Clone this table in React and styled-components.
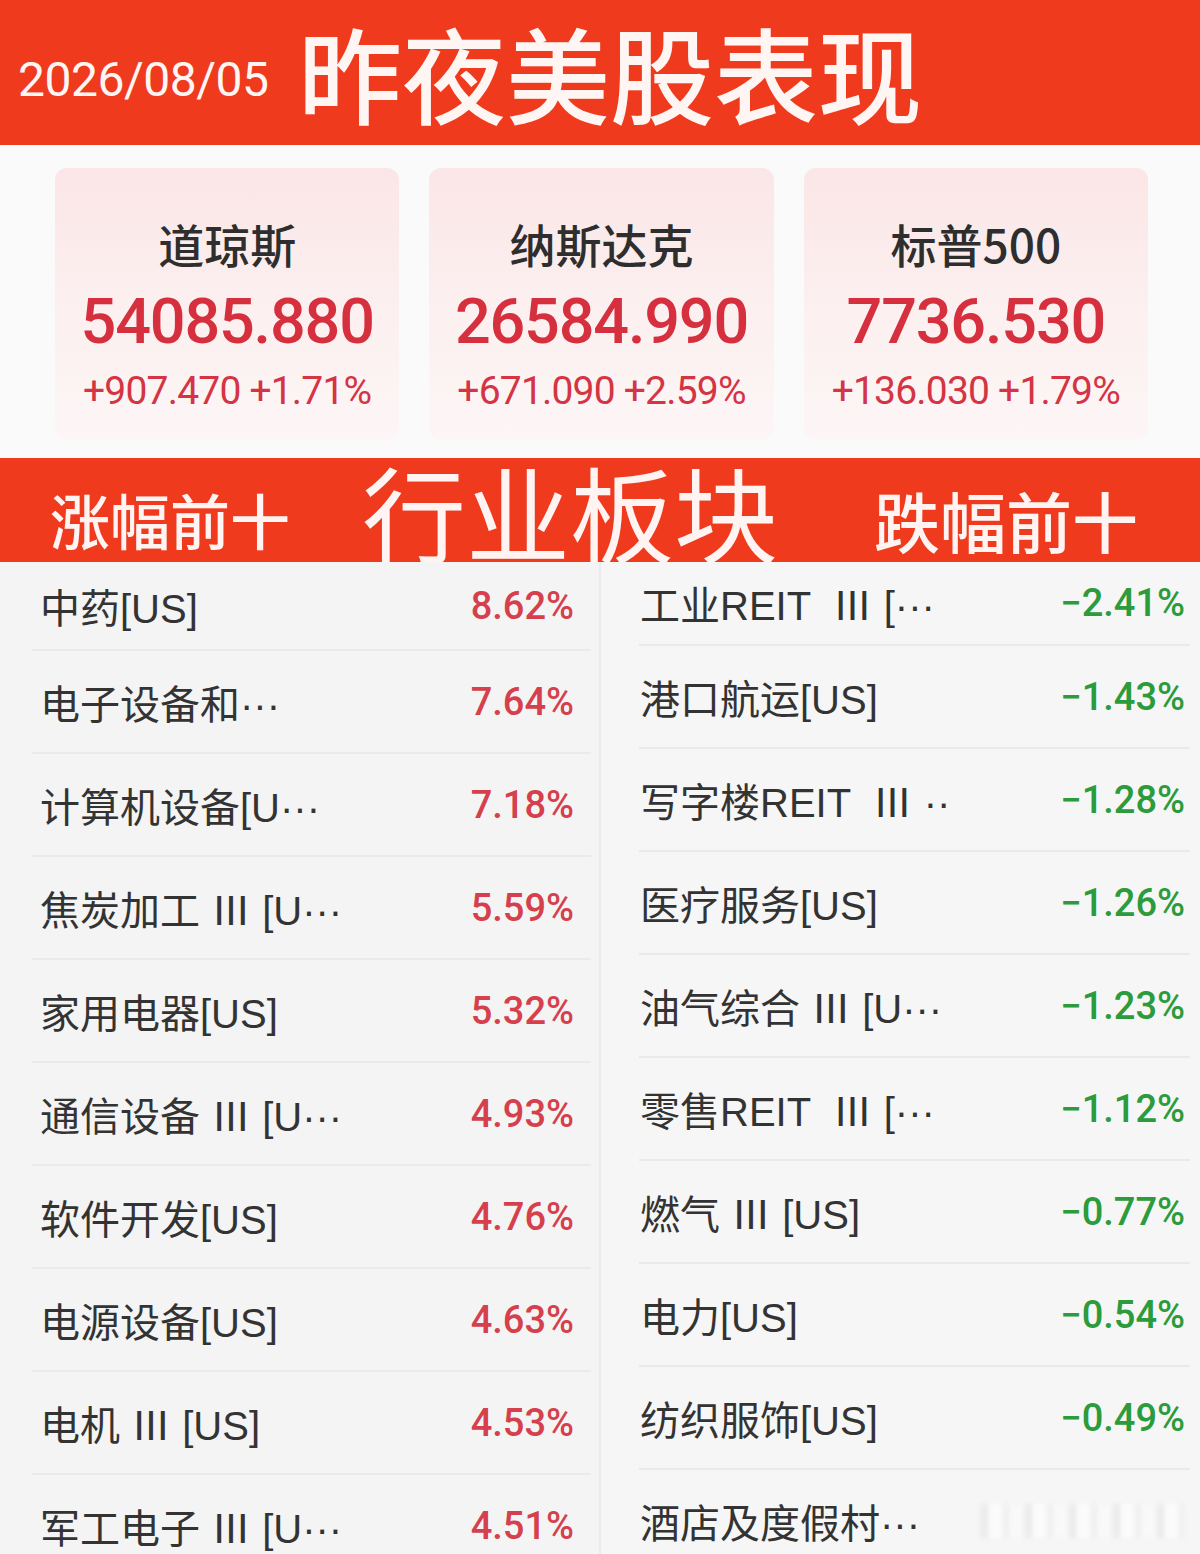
import React from "react";
import styled, { createGlobalStyle } from "styled-components";

const GlobalStyle = createGlobalStyle`
  html, body { margin: 0; padding: 0; background: #f5f5f5; }
  body { font-family: "Noto Sans CJK SC", "Noto Sans", sans-serif; }
`;

const RED = "#ef3a1e";
const CJK = `"Noto Sans CJK SC", "Noto Sans", sans-serif`;
const NUM = `Roboto, "Noto Sans CJK SC", sans-serif`;
const LIST = `"Liberation Sans", "Noto Sans CJK SC", sans-serif`;

const Page = styled.div`
  width: 1200px;
  height: 1554px;
  overflow: hidden;
  background: #f5f5f5;
`;

const TopBar = styled.header`
  height: 145px;
  background: ${RED};
  display: flex;
  align-items: center;
  padding-left: 18px;
  box-sizing: border-box;
  color: #fff6f4;
`;

const DateText = styled.div`
  font-family: ${NUM};
  font-size: 48px;
  letter-spacing: -0.5px;
  margin-top: 14px;
  width: 262px;
  flex-shrink: 0;
`;

const Title = styled.h1`
  margin: 0 0 0 18px;
  font-family: ${CJK};
  font-weight: 500;
  font-size: 104px;
  line-height: 1.2;
  white-space: nowrap;
`;

const IndexSection = styled.section`
  background: #fafafa;
  padding: 23px 52px 18px 55px;
  display: grid;
  grid-template-columns: repeat(3, 1fr);
  gap: 30px;
`;

const Card = styled.div`
  height: 272px;
  border-radius: 12px;
  background: linear-gradient(180deg, #fbe6e7 0%, #fcf0f0 55%, #fdf6f6 100%);
  display: flex;
  flex-direction: column;
  align-items: center;
  box-sizing: border-box;
  padding-top: 48px;
`;

const CardName = styled.div`
  font-family: ${CJK};
  font-weight: 500;
  font-size: 46px;
  line-height: 54px;
  color: #2e2e2e;
`;

const CardValue = styled.div`
  font-family: ${NUM};
  font-weight: 500;
  font-size: 63px;
  letter-spacing: -1.2px;
  line-height: 80px;
  margin-top: 12px;
  color: #d6303f;
`;

const CardChange = styled.div`
  font-family: ${NUM};
  font-size: 39px;
  letter-spacing: -0.8px;
  line-height: 46px;
  margin-top: 6px;
  color: #d43444;
  white-space: pre;
`;

const SectorBar = styled.section`
  height: 104px;
  background: ${RED};
  display: flex;
  align-items: center;
  padding-left: 50px;
  box-sizing: border-box;
  color: #fff4f2;
  font-family: ${CJK};
`;

const SideLabel = styled.div`
  font-size: ${(p) => p.$size}px;
  font-weight: 500;
  line-height: 1;
  margin-top: 18px;
  margin-left: ${(p) => p.$ml}px;
`;

const BigLabel = styled.div`
  font-size: 104px;
  font-weight: 400;
  line-height: 1;
  margin-left: 72px;
  margin-top: 2px;
`;

const List = styled.section`
  display: grid;
  grid-template-columns: 599px 2px 599px;
`;

const Column = styled.div`
  background: ${(p) => p.$bg};
  display: flex;
  flex-direction: column;
`;

const Divider = styled.div`
  background: #ebebeb;
`;

const Row = styled.div`
  height: ${(p) => p.$h}px;
  margin: 0 ${(p) => p.$mr}px 0 ${(p) => p.$ml}px;
  padding: 0 ${(p) => p.$pr}px 0 ${(p) => p.$pl}px;
  display: flex;
  align-items: center;
  justify-content: space-between;
  border-bottom: 2px solid #eaeaea;
  box-sizing: border-box;
  flex-shrink: 0;
`;

const Name = styled.span`
  font-family: ${LIST};
  font-size: 40px;
  color: #333;
  white-space: pre;
`;

const Pct = styled.span`
  font-family: ${NUM};
  font-weight: 500;
  font-size: 38px;
  color: ${(p) => (p.$up ? "#d5404c" : "#2b9b3b")};
`;

const Watermark = styled.span`
  width: 205px;
  height: 34px;
  background: repeating-linear-gradient(
    90deg,
    rgba(225, 225, 225, 0.45) 0 9px,
    rgba(255, 255, 255, 0.6) 9px 22px,
    rgba(232, 232, 232, 0.35) 22px 30px,
    rgba(252, 252, 252, 0.5) 30px 44px
  );
  filter: blur(2px);
`;

const indices = [
  { name: "道琼斯", value: "54085.880", change: "+907.470 +1.71%" },
  { name: "纳斯达克", value: "26584.990", change: "+671.090 +2.59%" },
  { name: "标普500", value: "7736.530", change: "+136.030 +1.79%" },
];

const gainers = [
  ["中药[US]", "8.62%"],
  ["电子设备和···", "7.64%"],
  ["计算机设备[U···", "7.18%"],
  ["焦炭加工 Ⅲ [U···", "5.59%"],
  ["家用电器[US]", "5.32%"],
  ["通信设备 Ⅲ [U···", "4.93%"],
  ["软件开发[US]", "4.76%"],
  ["电源设备[US]", "4.63%"],
  ["电机 Ⅲ [US]", "4.53%"],
  ["军工电子 Ⅲ [U···", "4.51%"],
];

const losers = [
  ["工业REIT  Ⅲ [···", "−2.41%"],
  ["港口航运[US]", "−1.43%"],
  ["写字楼REIT  Ⅲ ··", "−1.28%"],
  ["医疗服务[US]", "−1.26%"],
  ["油气综合 Ⅲ [U···", "−1.23%"],
  ["零售REIT  Ⅲ [···", "−1.12%"],
  ["燃气 Ⅲ [US]", "−0.77%"],
  ["电力[US]", "−0.54%"],
  ["纺织服饰[US]", "−0.49%"],
  ["酒店及度假村···", null],
];

export default function App() {
  return (
    <Page>
      <GlobalStyle />
      <TopBar>
        <DateText>2026/08/05</DateText>
        <Title>昨夜美股表现</Title>
      </TopBar>
      <IndexSection>
        {indices.map((i) => (
          <Card key={i.name}>
            <CardName>{i.name}</CardName>
            <CardValue>{i.value}</CardValue>
            <CardChange>{i.change}</CardChange>
          </Card>
        ))}
      </IndexSection>
      <SectorBar>
        <SideLabel $size={60} $ml={0}>涨幅前十</SideLabel>
        <BigLabel>行业板块</BigLabel>
        <SideLabel $size={66} $ml={96}>跌幅前十</SideLabel>
      </SectorBar>
      <List>
        <Column $bg="#f4f4f4">
          {gainers.map(([n, v], idx) => (
            <Row key={n} $h={idx === 0 ? 89 : 103} $ml={32} $mr={8} $pl={8} $pr={17}>
              <Name>{n}</Name>
              <Pct $up>{v}</Pct>
            </Row>
          ))}
        </Column>
        <Divider />
        <Column $bg="#f6f6f6">
          {losers.map(([n, v], idx) => (
            <Row key={n} $h={idx === 0 ? 84 : 103} $ml={38} $mr={10} $pl={1} $pr={5}>
              <Name>{n}</Name>
              {v ? <Pct>{v}</Pct> : <Watermark />}
            </Row>
          ))}
        </Column>
      </List>
    </Page>
  );
}
